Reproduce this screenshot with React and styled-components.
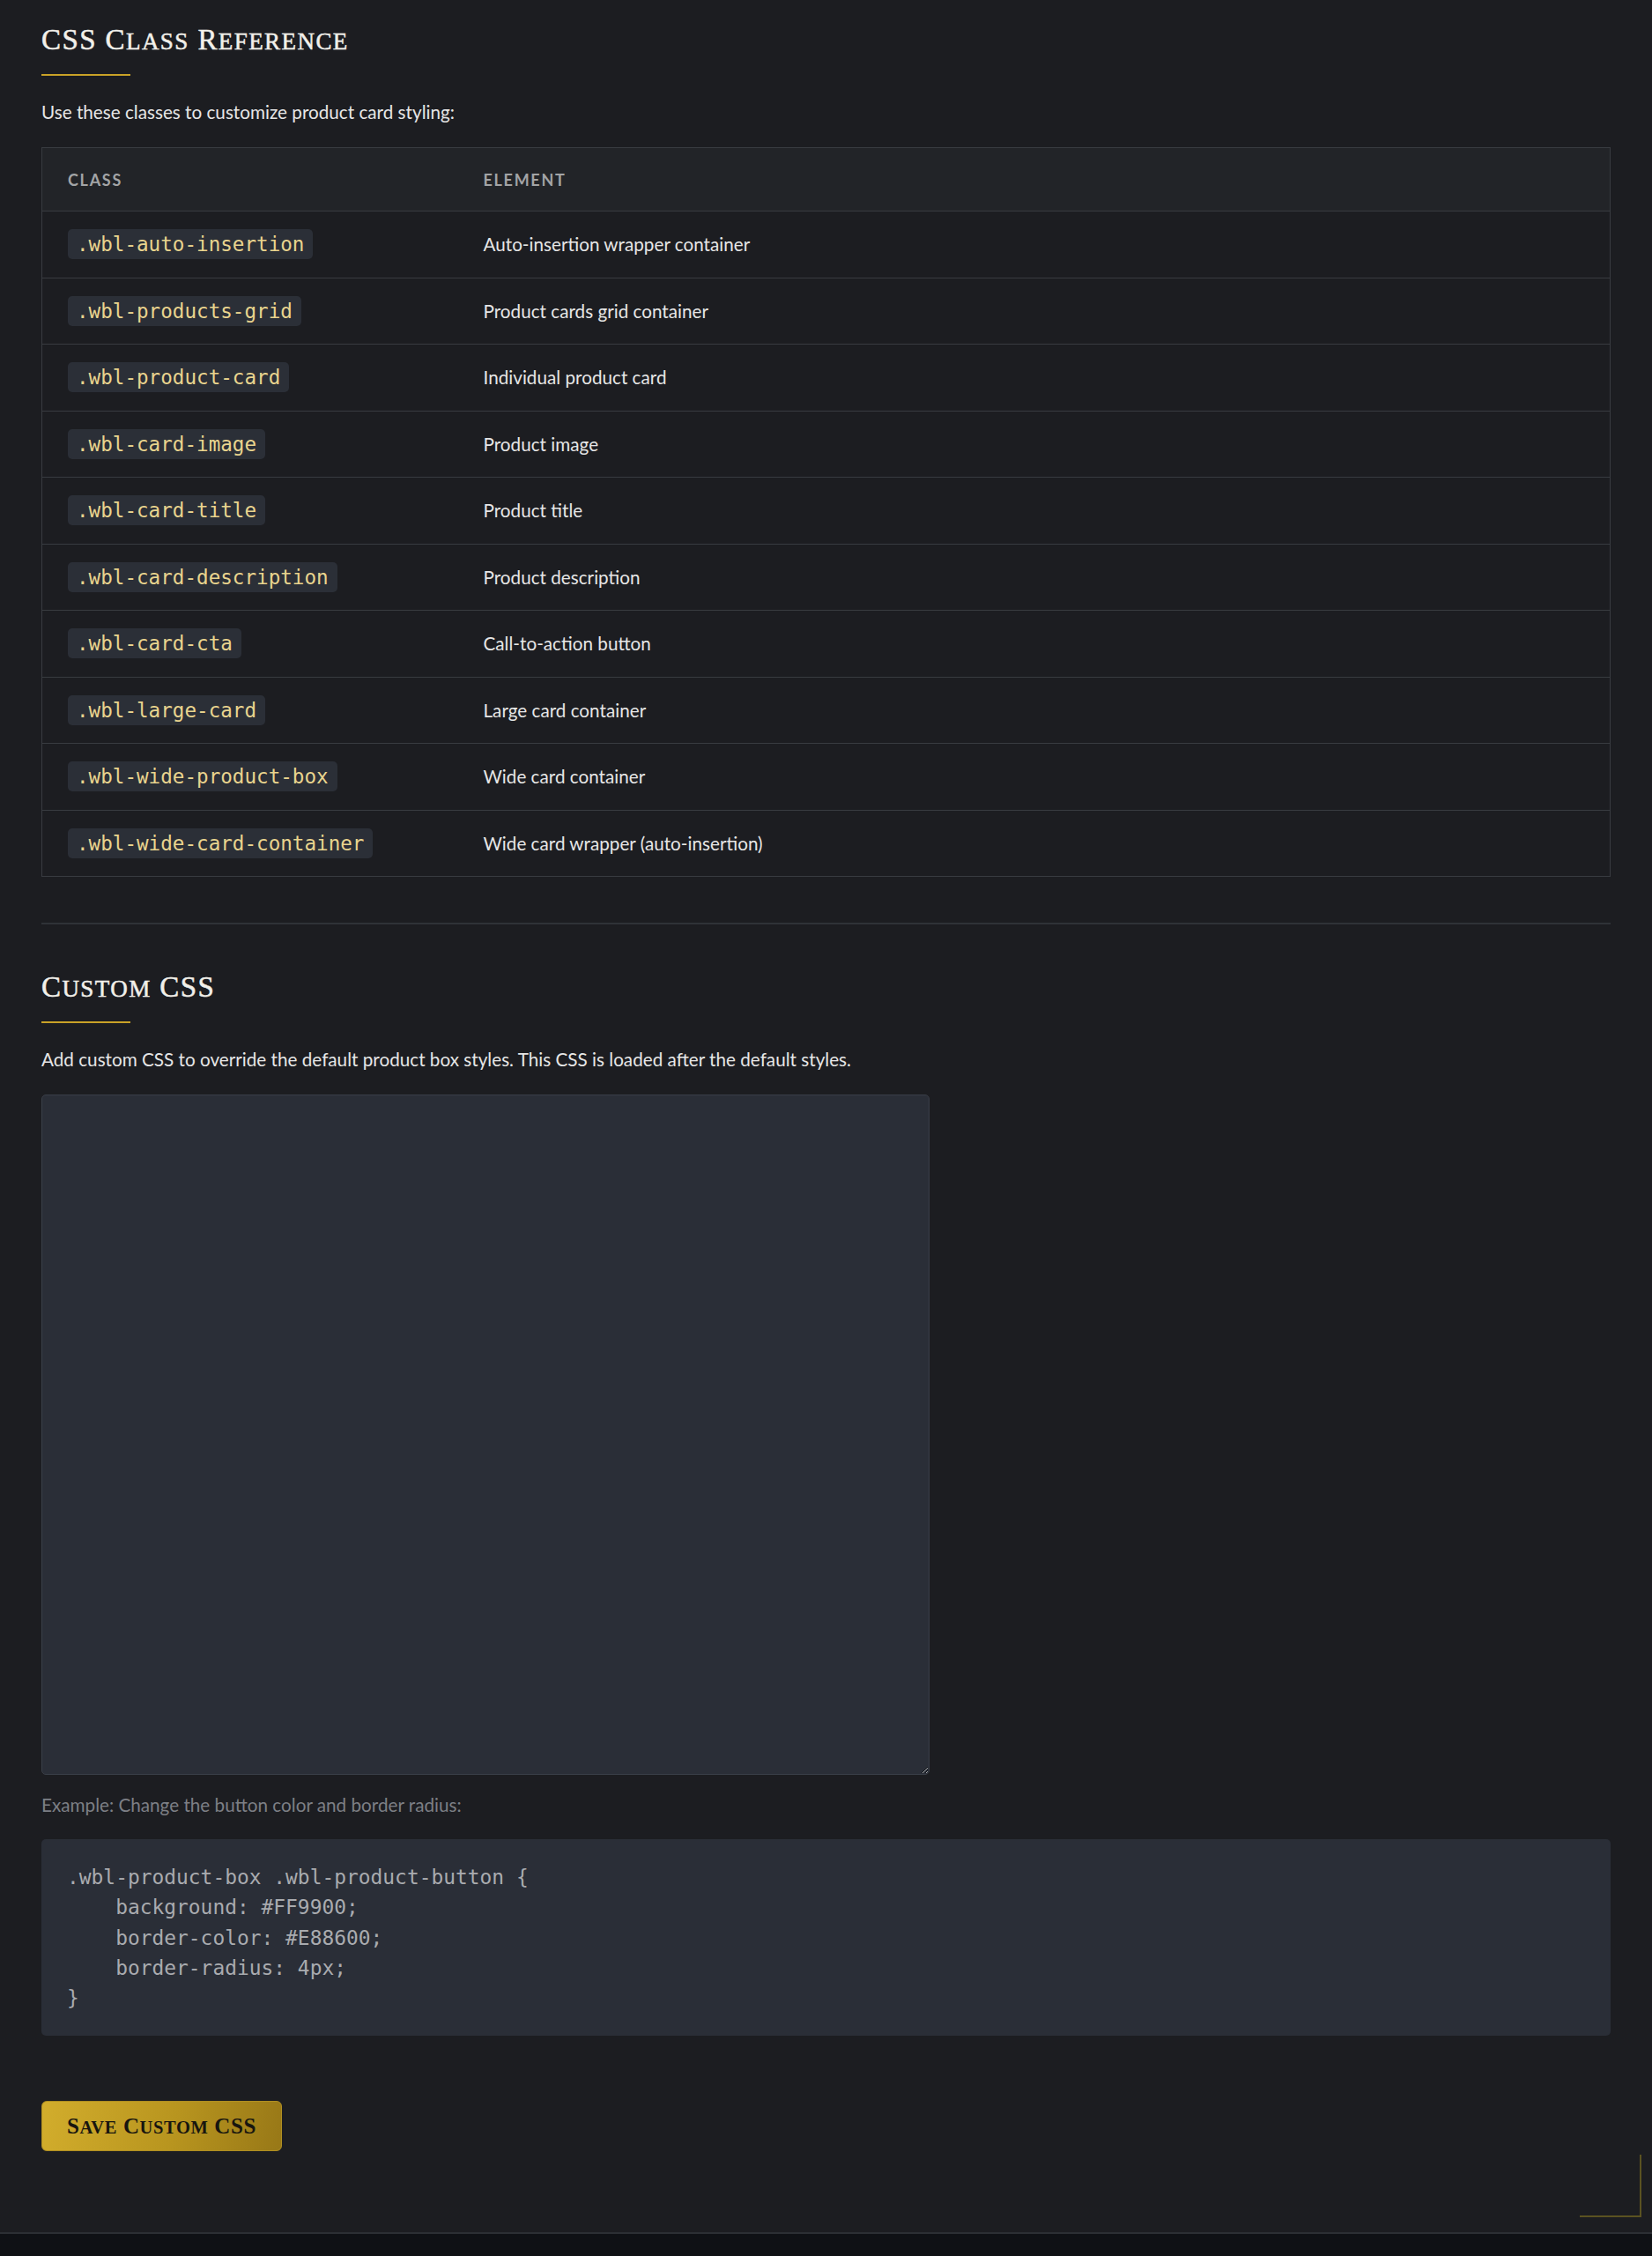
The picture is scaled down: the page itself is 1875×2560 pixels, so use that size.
import React from "react";
import styled, { createGlobalStyle } from "styled-components";

const colours = {
  page: "#1c1d21",
  headerBg: "#222428",
  border: "#383b40",
  text: "#e6e6e6",
  muted: "#7c7f85",
  headerText: "#a3a4a6",
  gold: "#c9a227",
  chipBg: "#2b2f37",
  chipText: "#e9d48e",
  field: "#2a2e37",
  fieldBorder: "#3a3f48",
  footer: "#0f1115",
};

const classes = [
  [".wbl-auto-insertion", "Auto-insertion wrapper container"],
  [".wbl-products-grid", "Product cards grid container"],
  [".wbl-product-card", "Individual product card"],
  [".wbl-card-image", "Product image"],
  [".wbl-card-title", "Product title"],
  [".wbl-card-description", "Product description"],
  [".wbl-card-cta", "Call-to-action button"],
  [".wbl-large-card", "Large card container"],
  [".wbl-wide-product-box", "Wide card container"],
  [".wbl-wide-card-container", "Wide card wrapper (auto-insertion)"],
];

const exampleCss = `.wbl-product-box .wbl-product-button {
    background: #FF9900;
    border-color: #E88600;
    border-radius: 4px;
}`;

// The titles use a display face whose small caps are nearly full height,
// so lowercase runs are drawn as uppercase at a slightly smaller size.
const SmallCaps = ({ children }) => {
  const parts = children.match(/[a-z]+|[^a-z]+/g) || [];
  return parts.map((part, i) =>
    /[a-z]/.test(part[0]) ? <Lower key={i}>{part}</Lower> : <span key={i}>{part}</span>
  );
};

const App = () => {
  return (
    <>
      <GlobalStyle />
      <Page>
        <Content>
          {/* Class reference */}
          <Section>
            <Heading>
              <SmallCaps>CSS Class Reference</SmallCaps>
            </Heading>
            <Description>Use these classes to customize product card styling:</Description>
            <Table>
              <thead>
                <tr>
                  <HeadCell $width="472px">Class</HeadCell>
                  <HeadCell>Element</HeadCell>
                </tr>
              </thead>
              <tbody>
                {classes.map(([name, element]) => (
                  <Row key={name}>
                    <Cell>
                      <ClassChip>{name}</ClassChip>
                    </Cell>
                    <Cell>{element}</Cell>
                  </Row>
                ))}
              </tbody>
            </Table>
          </Section>

          <Divider />

          {/* Custom CSS */}
          <Section>
            <Heading>
              <SmallCaps>Custom CSS</SmallCaps>
            </Heading>
            <Description>
              Add custom CSS to override the default product box styles. This CSS is loaded after the default styles.
            </Description>
            <CssField spellCheck={false} />
            <Hint>Example: Change the button color and border radius:</Hint>
            <CodeBlock>{exampleCss}</CodeBlock>
            <SaveButton type="button">
              <SmallCaps>Save Custom CSS</SmallCaps>
            </SaveButton>
          </Section>
          <CornerMark />
        </Content>
        <Footer />
      </Page>
    </>
  );
};

const GlobalStyle = createGlobalStyle`
  html, body {
    margin: 0;
    background: ${colours.page};
  }
  body {
    font-family: Lato, "Noto Sans", sans-serif;
    color: ${colours.text};
  }
  * {
    box-sizing: border-box;
  }
`;

const Page = styled.div`
  display: flex;
  flex-direction: column;
  min-height: 2560px;
`;

const Content = styled.main`
  position: relative;
  flex: 1;
  padding: 25px 47px 92px;
`;

const Section = styled.section`
  display: flex;
  flex-direction: column;
  align-items: flex-start;
`;

const Lower = styled.span`
  font-size: 0.82em;
  text-transform: uppercase;
`;

const Heading = styled.h2`
  margin: 0;
  font-family: "Liberation Serif", "DejaVu Serif", serif;
  font-weight: 400;
  font-size: 33px;
  line-height: 40px;
  letter-spacing: 1.4px;
  color: #f2f0ea;
  -webkit-text-stroke: 0.5px #f2f0ea;

  &::after {
    content: "";
    display: block;
    width: 101px;
    height: 2px;
    margin-top: 17px;
    background: ${colours.gold};
    -webkit-text-stroke: 0;
  }
`;

const Description = styled.p`
  margin: 26px 0 25px;
  font-size: 20.7px;
  line-height: 30px;
  color: ${colours.text};
`;

const Table = styled.table`
  width: 100%;
  border-collapse: collapse;
  border: 1px solid ${colours.border};
`;

const HeadCell = styled.th`
  width: ${(p) => p.$width || "auto"};
  height: 72px;
  padding: 0 29px;
  text-align: left;
  background: ${colours.headerBg};
  border-bottom: 1px solid ${colours.border};
  font-size: 18px;
  font-weight: 700;
  letter-spacing: 1.7px;
  text-transform: uppercase;
  color: ${colours.headerText};
`;

const Row = styled.tr`
  height: 75.5px;
  border-bottom: 1px solid ${colours.border};

  &:last-child {
    border-bottom: none;
  }
`;

const Cell = styled.td`
  padding: 0 29px;
  font-size: 20.7px;
  color: ${colours.text};
  vertical-align: middle;
`;

const ClassChip = styled.code`
  display: inline-block;
  padding: 3px 10px;
  border-radius: 5px;
  background: ${colours.chipBg};
  font-family: "DejaVu Sans Mono", "Liberation Mono", monospace;
  font-size: 22.6px;
  line-height: 28px;
  color: ${colours.chipText};
`;

const Divider = styled.hr`
  margin: 52px 0 51px;
  border: none;
  border-top: 2px solid #2f3237;
`;

const CssField = styled.textarea`
  width: 1008px;
  height: 772px;
  padding: 12px;
  border: 1px solid ${colours.fieldBorder};
  border-radius: 5px;
  background: ${colours.field};
  color: ${colours.text};
  font-family: "DejaVu Sans Mono", monospace;
  font-size: 20px;
  outline: none;
`;

const Hint = styled.p`
  margin: 19px 0 24px;
  font-size: 20.7px;
  line-height: 30px;
  color: ${colours.muted};
`;

const CodeBlock = styled.pre`
  align-self: stretch;
  margin: 0 0 74px;
  padding: 26px 29px;
  border-radius: 5px;
  background: ${colours.field};
  font-family: "DejaVu Sans Mono", "Liberation Mono", monospace;
  font-size: 22.9px;
  line-height: 34.3px;
  color: #a9abaf;
`;

const SaveButton = styled.button`
  width: 273px;
  height: 57px;
  padding: 0;
  border: 1px solid #b08f22;
  border-radius: 6px;
  background: linear-gradient(100deg, #d2ad2c 0%, #b8951f 55%, #987817 100%);
  font-family: "Liberation Serif", "DejaVu Serif", serif;
  font-weight: 700;
  font-size: 25px;
  letter-spacing: 0.6px;
  color: #17150f;
  cursor: pointer;
`;

const CornerMark = styled.span`
  position: absolute;
  right: 12px;
  bottom: 17px;
  width: 70px;
  height: 71px;
  border-right: 2px solid #5a5221;
  border-bottom: 2px solid #5a5221;
`;

const Footer = styled.footer`
  height: 27px;
  border-top: 2px solid #2c2f34;
  background: ${colours.footer};
`;

export default App;
